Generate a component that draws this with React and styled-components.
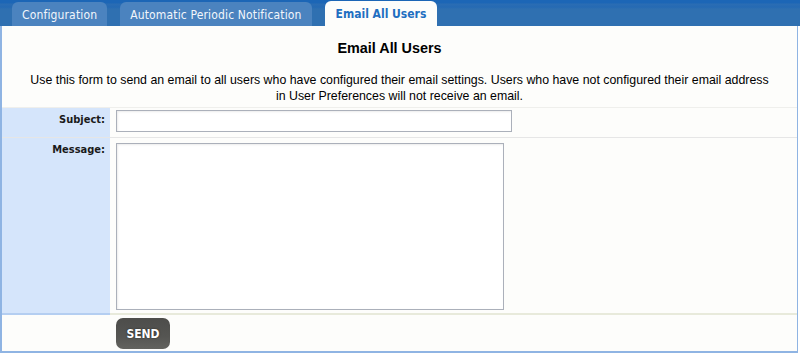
import React from "react";
import styled, { createGlobalStyle } from "styled-components";

const GlobalStyle = createGlobalStyle`
  html, body {
    margin: 0;
    padding: 0;
    background: #ffffff;
  }
  body {
    font-family: "Liberation Sans", Arial, sans-serif;
  }
`;

const Page = styled.div`
  width: 800px;
  height: 355px;
  display: flex;
  flex-direction: column;
`;

const TabBar = styled.div`
  height: 26px;
  display: flex;
  align-items: flex-end;
  gap: 13px;
  padding-left: 12px;
  background: linear-gradient(#1c66b6 0px, #1c66b6 3px, #2b6db3 4px, #256ab4 7px, #2f70b1 9px, #2f70b1 100%);
`;

const Tab = styled.div`
  height: ${({ active }) => (active ? "25px" : "24px")};
  padding: 1px ${({ active }) => (active ? 11 : 10)}px 0;
  display: flex;
  align-items: center;
  border-radius: 6px 6px 0 0;
  box-sizing: border-box;
  font-family: "DejaVu Sans Condensed", "DejaVu Sans", sans-serif;
  font-size: 12px;
  letter-spacing: ${({ active }) => (active ? 0 : 0.15)}px;
  font-weight: ${({ active }) => (active ? 700 : 400)};
  color: ${({ active }) => (active ? "#1f6fc1" : "#f2f6fb")};
  background: ${({ active }) => (active ? "#fdfdfb" : "#4b83bf")};
`;

const Panel = styled.div`
  width: 798px;
  height: 327px;
  box-sizing: border-box;
  background: #fdfdfb;
  border-left: 2px solid #8fb4e3;
  border-right: 1px solid #8fb4e3;
  border-bottom: 2px solid #8fb4e3;
  display: flex;
  flex-direction: column;
`;

const Title = styled.h2`
  margin: 0;
  padding: 14px 20px 0 0;
  text-align: center;
  font-size: 14.4px;
  font-weight: 700;
  color: #000;
  line-height: 17px;
`;

const Intro = styled.p`
  margin: 15px 0 0;
  text-align: center;
  font-size: 12.35px;
  line-height: 16px;
  color: #000;
`;

const Form = styled.div`
  margin-top: 3px;
  display: grid;
  grid-template-columns: 108px 1fr;
  grid-template-rows: 30px 177px 1fr;
  flex: 1;
  border-top: 1px solid #efefec;
`;

const Label = styled.div`
  background: #d5e5fb;
  text-align: right;
  padding: ${({ top }) => top}px 5px 0 0;
  font-family: "DejaVu Sans Condensed", "DejaVu Sans", sans-serif;
  font-size: 11px;
  font-weight: 700;
  color: #1a1a1a;
  border-bottom: ${({ last }) => (last ? "2px solid #b4cef1" : "1px solid #e6e6e6")};
`;

const Field = styled.div`
  padding: ${({ top }) => top}px 0 0 6px;
  border-bottom: ${({ last }) => (last ? "2px solid #e8eadb" : "1px solid #e6e6e6")};
`;

const TextInput = styled.input`
  display: block;
  box-sizing: border-box;
  width: 396px;
  height: 22px;
  border: 1px solid #abb0ba;
  background: #ffffff;
  box-shadow: inset 1px 1px 2px rgba(0, 0, 0, 0.08);
  padding: 2px 4px;
  font-size: 12px;
  outline: none;
`;

const TextArea = styled.textarea`
  display: block;
  box-sizing: border-box;
  width: 388px;
  height: 167px;
  border: 1px solid #abb0ba;
  background: #ffffff;
  box-shadow: inset 1px 1px 2px rgba(0, 0, 0, 0.08);
  resize: none;
  outline: none;
  padding: 2px 4px;
  font-size: 12px;
`;

const Spacer = styled.div``;

const ButtonCell = styled.div`
  padding: 3px 0 0 6px;
`;

const SendButton = styled.button`
  width: 54px;
  height: 31px;
  border: none;
  border-radius: 7px;
  background: linear-gradient(#4d4d4b, #555552 60%, #63635f);
  color: #ffffff;
  font-family: "DejaVu Sans Condensed", "DejaVu Sans", sans-serif;
  font-size: 12px;
  font-weight: 700;
  text-shadow: 0 0 2px rgba(0, 0, 0, 0.6);
  cursor: pointer;
  padding: 0;
`;

export default function App() {
  return (
    <>
      <GlobalStyle />
      <Page>
        <TabBar>
          <Tab>Configuration</Tab>
          <Tab>Automatic Periodic Notification</Tab>
          <Tab active>Email All Users</Tab>
        </TabBar>
        <Panel>
          <Title>Email All Users</Title>
          <Intro>
            Use this form to send an email to all users who have configured their email settings. Users who have not configured their email address
            <br />
            in User Preferences will not receive an email.
          </Intro>
          <Form>
            <Label top={5}>Subject:</Label>
            <Field top={2}>
              <TextInput type="text" />
            </Field>
            <Label top={5} last>Message:</Label>
            <Field top={5} last>
              <TextArea />
            </Field>
            <Spacer />
            <ButtonCell>
              <SendButton>SEND</SendButton>
            </ButtonCell>
          </Form>
        </Panel>
      </Page>
    </>
  );
}
